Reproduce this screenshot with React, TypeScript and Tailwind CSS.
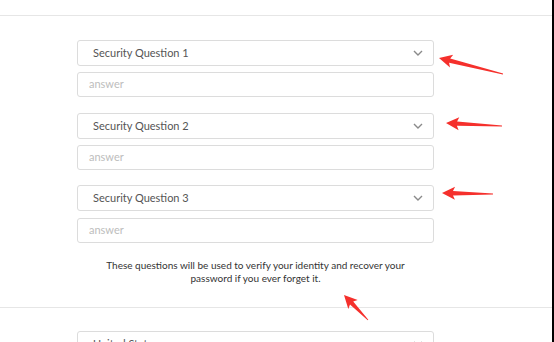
import React from "react";

type Pt = [number, number];

// annotation arrow: tapered shaft + triangular head, pointing from tail to tip
function arrowPoints(tip: Pt, tail: Pt, headLen = 13, headW = 6.5, shaftW = 2.2) {
  const dx = tip[0] - tail[0];
  const dy = tip[1] - tail[1];
  const len = Math.hypot(dx, dy);
  const ux = dx / len;
  const uy = dy / len;
  const nx = -uy;
  const ny = ux;
  const bx = tip[0] - ux * headLen;
  const by = tip[1] - uy * headLen;
  const pts: Pt[] = [
    tip,
    [bx + nx * headW, by + ny * headW],
    [bx + ux * 2 + nx * shaftW, by + uy * 2 + ny * shaftW],
    [tail[0] + nx * 0.4, tail[1] + ny * 0.4],
    [tail[0] - nx * 0.4, tail[1] - ny * 0.4],
    [bx + ux * 2 - nx * shaftW, by + uy * 2 - ny * shaftW],
    [bx - nx * headW, by - ny * headW],
  ];
  return pts.map((p) => `${p[0].toFixed(1)},${p[1].toFixed(1)}`).join(" ");
}

const arrows: { tip: Pt; tail: Pt }[] = [
  { tip: [439, 58], tail: [503, 74] },
  { tip: [446, 123], tail: [502, 126] },
  { tip: [442, 193], tail: [493, 194] },
  { tip: [344, 295], tail: [368, 320] },
];

function Chevron() {
  return (
    <svg width="10" height="6" viewBox="0 0 10 6" className="shrink-0">
      <polyline points="1,1 5,5 9,1" fill="none" stroke="#8a8a8a" strokeWidth="1.4" />
    </svg>
  );
}

function QuestionSelect({ label }: { label: string }) {
  return (
    <div className="h-[26px] flex items-center justify-between pl-[15px] pr-[10px] border border-[#dcdcdc] rounded-[3px] bg-white text-[11px] text-[#555]">
      <span>{label}</span>
      <Chevron />
    </div>
  );
}

function AnswerInput() {
  return (
    <div className="h-[25px] flex items-center pl-[11px] border border-[#dcdcdc] rounded-[3px] bg-white text-[11px] text-[#bdbdbd]">
      answer
    </div>
  );
}

export default function App() {
  return (
    <div
      className="relative w-[554px] h-[342px] overflow-hidden bg-white border-r-2 border-black"
      style={{ fontFamily: 'Lato, "Liberation Sans", sans-serif' }}
    >
      <div className="h-[16px] border-b border-[#e6e6e6]" />

      <section className="border-b border-[#e6e6e6] pt-[24px] pb-[22px]">
        <div className="ml-[77px] w-[357px] flex flex-col">
          <QuestionSelect label="Security Question 1" />
          <div className="mt-[6px]">
            <AnswerInput />
          </div>
          <div className="mt-[16px]">
            <QuestionSelect label="Security Question 2" />
          </div>
          <div className="mt-[6px]">
            <AnswerInput />
          </div>
          <div className="mt-[15px]">
            <QuestionSelect label="Security Question 3" />
          </div>
          <div className="mt-[7px]">
            <AnswerInput />
          </div>
          <p className="mt-[16px] px-[20px] text-center text-[10px] leading-[13px] text-[#333]">
            These questions will be used to verify your identity and recover your password if you
            ever forget it.
          </p>
        </div>
      </section>

      <div className="pt-[23px]">
        <div className="ml-[77px] w-[357px]">
          <QuestionSelect label="United States" />
        </div>
      </div>

      <svg className="absolute inset-0 pointer-events-none" width="554" height="342">
        {arrows.map((a, i) => (
          <polygon key={i} points={arrowPoints(a.tip, a.tail)} fill="#f5302c" />
        ))}
      </svg>
    </div>
  );
}
